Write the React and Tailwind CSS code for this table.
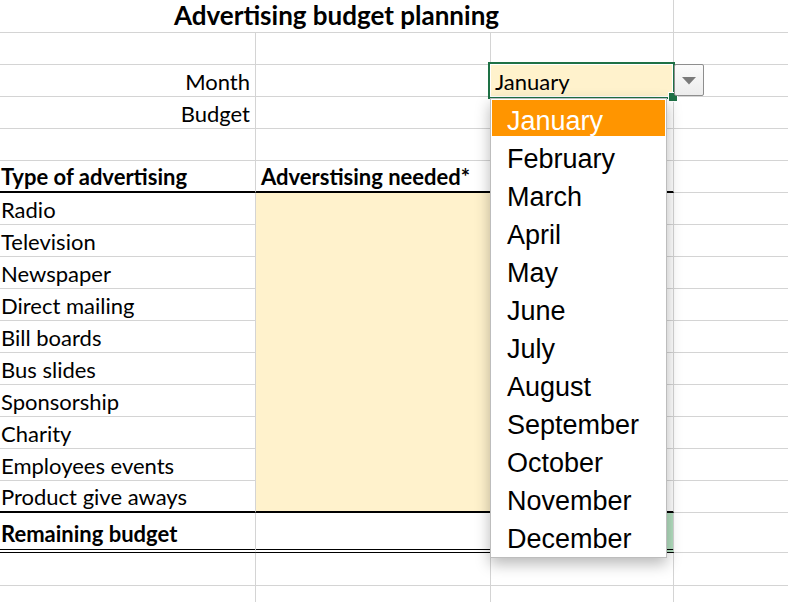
import React from 'react';

const months = [
  'January', 'February', 'March', 'April', 'May', 'June',
  'July', 'August', 'September', 'October', 'November', 'December',
];

const types = [
  'Radio', 'Television', 'Newspaper', 'Direct mailing', 'Bill boards',
  'Bus slides', 'Sponsorship', 'Charity', 'Employees events', 'Product give aways',
];

// one spreadsheet row: columns A, B, C, D
function Row({ h = 'h-[32px]', a, b, c, d }) {
  return (
    <div className={`flex ${h}`}>
      <div className={`w-[256px] shrink-0 border-r border-r-[#d4d4d4] flex items-center pt-[2px] ${a?.cls || 'border-b border-b-[#d4d4d4]'}`}>
        {a?.text}
      </div>
      <div className={`w-[235px] shrink-0 border-r border-r-[#d4d4d4] flex items-center pt-[2px] ${b?.cls || 'border-b border-b-[#d4d4d4]'}`}>
        {b?.text}
      </div>
      <div className={`w-[183px] shrink-0 border-r border-r-[#d4d4d4] flex items-center ${c?.cls || 'border-b border-b-[#d4d4d4]'}`}>
        {c?.text}
      </div>
      <div className={`flex-1 ${d?.cls || 'border-b border-b-[#d4d4d4]'}`} />
    </div>
  );
}

export default function App() {
  const black2 = 'border-b-2 border-b-black';
  return (
    <div
      className="relative w-[788px] h-[602px] overflow-hidden bg-white text-black text-[22px] leading-[26px]"
      style={{ fontFamily: 'Lato, "Liberation Sans", sans-serif' }}
    >
      {/* title row (A:C merged) */}
      <div className="flex h-[33px]">
        <div className="w-[674px] shrink-0 border-r border-r-[#d4d4d4] border-b border-b-[#d4d4d4] flex items-center justify-center pb-[2px] font-bold text-[26px] leading-[28px]">
          Advertising budget planning
        </div>
        <div className="flex-1 border-b border-b-[#d4d4d4]" />
      </div>

      <Row />
      <Row a={{ text: <span className="ml-auto pr-[5px]">Month</span> }} />
      <Row a={{ text: <span className="ml-auto pr-[5px]">Budget</span> }} />
      <Row />
      <Row
        a={{ text: <span className="pl-[1px] font-bold">Type of advertising</span>, cls: black2 }}
        b={{ text: <span className="pl-[5px] font-bold">Adverstising needed*</span>, cls: black2 }}
        c={{ cls: black2 }}
      />

      {types.map((t, i) => {
        const last = i === types.length - 1;
        return (
          <Row
            key={t}
            a={{ text: <span className="pl-[1px]">{t}</span>, cls: last ? black2 : 'border-b border-b-[#d4d4d4]' }}
            b={{ cls: `bg-[#fff2cc] ${last ? black2 : 'border-b border-b-[#fff2cc]'}` }}
            c={{ cls: last ? black2 : 'border-b border-b-[#d4d4d4]' }}
          />
        );
      })}

      <Row
        h="h-[40px]"
        a={{ text: <span className="pl-[1px] pt-[4px] font-bold">Remaining budget</span>, cls: 'border-b-4 border-double border-b-black' }}
        b={{ cls: 'border-b-4 border-double border-b-black' }}
        c={{ cls: 'bg-[#b4dfc0] border-b-4 border-double border-b-black' }}
      />
      <Row h="h-[33px]" />
      <Row />

      {/* selected cell C3 */}
      <div className="absolute left-[488px] top-[62px] w-[187px] h-[37px] border-2 border-[#1e7145] bg-white p-[1px]">
        <div className="h-full bg-[#fff2cc] flex items-center pl-[4px] pt-[2px]">January</div>
      </div>
      <div className="absolute left-[668px] top-[92px] w-[10px] h-[10px] bg-[#1e7145] border border-white" />

      {/* dropdown button */}
      <div className="absolute left-[674px] top-[64px] w-[30px] h-[32px] border border-[#8e8e8e] rounded-[2px] bg-gradient-to-b from-[#fbfbfb] to-[#ececec] flex items-center justify-center">
        <svg width="16" height="9" viewBox="0 0 16 9">
          <path d="M1 1h14L8 8.5z" fill="#7a7a7a" />
        </svg>
      </div>

      {/* dropdown list */}
      <div
        className="absolute left-[490px] top-[98px] w-[177px] border border-[#bdbdbd] bg-white p-[1px] shadow-[0_6px_14px_rgba(0,0,0,0.28)]"
        style={{ fontFamily: '"Liberation Sans", Arial, sans-serif' }}
      >
        {months.map((m, i) => (
          <div
            key={m}
            className={`h-[38px] flex items-center pl-[15px] pt-[6px] border-b-2 border-b-white text-[27px] leading-[30px] ${i === 0 ? 'bg-[#ff9500] text-white' : 'text-black'}`}
          >
            {m}
          </div>
        ))}
      </div>
    </div>
  );
}
